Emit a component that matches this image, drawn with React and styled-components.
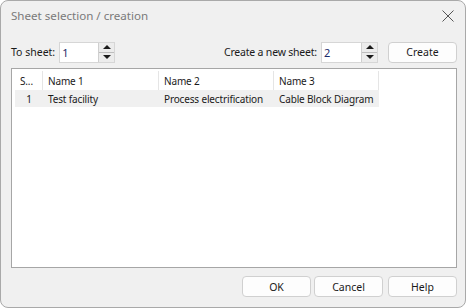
import React from "react";
import styled, { createGlobalStyle } from "styled-components";

const Global = createGlobalStyle`
  html, body { margin: 0; padding: 0; background: #ffffff; }
  * { box-sizing: border-box; }
`;

const Window = styled.div`
  width: 466px;
  height: 308px;
  background: #f0f0f0;
  border: 1px solid #a9a9a9;
  border-radius: 8px;
  display: flex;
  flex-direction: column;
  font-family: "Noto Sans", "Open Sans", sans-serif;
  font-size: 10.5px;
  color: #1a1a1a;
  overflow: hidden;
`;

const TitleBar = styled.div`
  height: 31px;
  display: flex;
  align-items: center;
  justify-content: space-between;
  padding: 0 10px 2px 10px;
`;

const Title = styled.div`
  font-family: "Noto Sans", "Open Sans", sans-serif;
  font-size: 11.6px;
  color: #7a7a7a;
`;

const Close = styled.div`
  width: 14px;
  height: 14px;
`;

const Body = styled.div`
  flex: 1;
  display: flex;
  flex-direction: column;
  padding: 9px 8px 10px 10px;
`;

const Toolbar = styled.div`
  display: flex;
  align-items: center;
  height: 22px;
`;

const Label = styled.span`
  margin-right: 4px;
  letter-spacing: ${p => p.$ls || 0}px;
`;

const Spin = styled.div`
  display: flex;
  height: 21px;
  border: 1px solid #d6d6d6;
  background: #ffffff;
  margin-right: ${p => p.$mr || 0}px;
`;

const SpinInput = styled.div`
  width: ${p => p.$w}px;
  padding: 2px 0 0 2px;
  font-size: 11px;
  color: #1a2a6a;
`;

const SpinButtons = styled.div`
  width: 16px;
  display: flex;
  flex-direction: column;
  border-left: 1px solid #cfcfcf;
`;

const SpinBtn = styled.div`
  flex: 1;
  display: flex;
  align-items: center;
  justify-content: center;
  border-bottom: ${p => (p.$top ? "1px solid #bdbdbd" : "none")};
  background: #ececec;
`;

const Arrow = styled.div`
  width: 0;
  height: 0;
  border-left: 4px solid transparent;
  border-right: 4px solid transparent;
  ${p => (p.$up ? "border-bottom: 4px solid #1a1a1a;" : "border-top: 4px solid #1a1a1a;")}
`;

const Spacer = styled.div`
  flex: 1;
`;

const Button = styled.div`
  width: 69px;
  height: 21px;
  background: #fdfdfd;
  border: 1px solid #d0d0d0;
  border-radius: 4px;
  display: flex;
  align-items: center;
  justify-content: center;
  margin-left: ${p => p.$ml || 0}px;
`;

const List = styled.div`
  margin-top: 5px;
  flex: 1;
  background: #ffffff;
  border: 1px solid #a6a6a6;
  padding: 2px 0 0 3px;
  font-size: 10px;
  letter-spacing: -0.15px;
`;

const Row = styled.div`
  display: flex;
  height: ${p => (p.$head ? 19 : 17)}px;
  width: 364px;
  background: ${p => (p.$head ? "#ffffff" : "#f0f0f0")};
`;

const Cell = styled.div`
  width: ${p => p.$w}px;
  padding-left: ${p => (p.$center ? 0 : 5)}px;
  border-right: ${p => (p.$head ? "1px solid #e5e5e5" : "none")};
  display: flex;
  align-items: center;
  justify-content: ${p => (p.$center ? "center" : "flex-start")};
  white-space: nowrap;
  overflow: hidden;
`;

const Footer = styled.div`
  display: flex;
  justify-content: flex-end;
  margin-top: 8px;
`;

const columns = [
  { key: "s", title: "S...", w: 28 },
  { key: "n1", title: "Name 1", w: 116 },
  { key: "n2", title: "Name 2", w: 115 },
  { key: "n3", title: "Name 3", w: 105 },
];

const rows = [
  { s: "1", n1: "Test facility", n2: "Process electrification", n3: "Cable Block Diagram" },
];

const SpinBox = ({ value, width, mr }) => (
  <Spin $mr={mr}>
    <SpinInput $w={width}>{value}</SpinInput>
    <SpinButtons>
      <SpinBtn $top>
        <Arrow $up />
      </SpinBtn>
      <SpinBtn>
        <Arrow />
      </SpinBtn>
    </SpinButtons>
  </Spin>
);

export default function App() {
  return (
    <>
      <Global />
      <Window>
        <TitleBar>
          <Title>Sheet selection / creation</Title>
          <Close>
            <svg width="14" height="14" viewBox="0 0 14 14">
              <path d="M1.5 1.5 L12.5 12.5 M12.5 1.5 L1.5 12.5" stroke="#555" strokeWidth="1" fill="none" />
            </svg>
          </Close>
        </TitleBar>
        <Body>
          <Toolbar>
            <Label>To sheet:</Label>
            <SpinBox value="1" width={38} />
            <Spacer />
            <Label $ls={-0.2}>Create a new sheet:</Label>
            <SpinBox value="2" width={39} mr={10} />
            <Button>Create</Button>
          </Toolbar>
          <List>
            <Row $head>
              {columns.map(c => (
                <Cell key={c.key} $w={c.w} $head>
                  {c.title}
                </Cell>
              ))}
            </Row>
            {rows.map((r, i) => (
              <Row key={i}>
                {columns.map(c => (
                  <Cell key={c.key} $w={c.w} $center={c.key === "s"}>
                    {r[c.key]}
                  </Cell>
                ))}
              </Row>
            ))}
          </List>
          <Footer>
            <Button>OK</Button>
            <Button $ml={3}>Cancel</Button>
            <Button $ml={5}>Help</Button>
          </Footer>
        </Body>
      </Window>
    </>
  );
}
